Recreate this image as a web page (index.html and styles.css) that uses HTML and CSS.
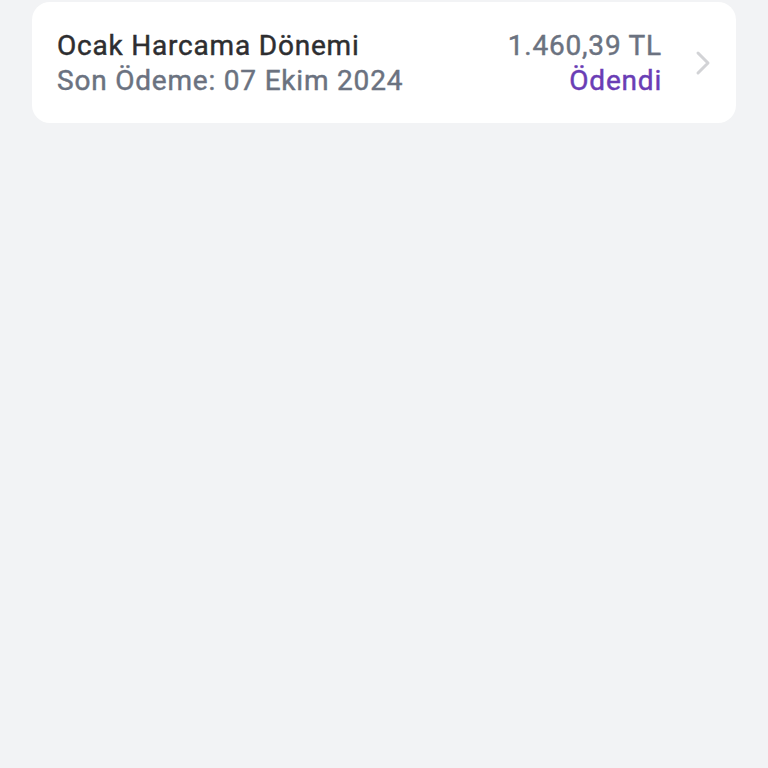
FILE: index.html
```html
<!DOCTYPE html>
<html lang="tr">
<head>
<meta charset="utf-8">
<link rel="stylesheet" href="styles.css">
</head>
<body>
<main class="page">
  <div class="card">
    <div class="info">
      <div class="title">Ocak Harcama Dönemi</div>
      <div class="sub">Son Ödeme: 07 Ekim 2024</div>
    </div>
    <div class="right">
      <div class="amount">1.460,39 TL</div>
      <div class="status">Ödendi</div>
    </div>
    <svg class="chev" width="18" height="26" viewBox="0 0 18 26"><path d="M4 3 L14 13 L4 23" fill="none" stroke="#d2d3d6" stroke-width="3" stroke-linecap="round" stroke-linejoin="round"/></svg>
  </div>
</main>
</body>
</html>
```
FILE: styles.css
```css
html, body { margin: 0; padding: 0; }
body {
  background: #f2f3f5;
  font-family: Roboto, "Liberation Sans", sans-serif;
  width: 768px;
  height: 768px;
}
.page { padding: 2px 32px 0 32px; }
.card {
  background: #ffffff;
  border-radius: 18px;
  height: 121px;
  box-sizing: border-box;
  padding: 0 24px 0 25px;
  display: flex;
  align-items: center;
}
.info { flex: 1; display: flex; flex-direction: column; }
.title, .sub, .amount, .status {
  font-size: 28px;
  line-height: 35px;
  font-weight: 400;
  letter-spacing: 0.8px;
  -webkit-text-stroke: 0.45px currentColor;
}
.title { color: #2e2e30; }
.sub { color: #6b7280; }
.right { display: flex; flex-direction: column; align-items: flex-end; }
.amount { color: #6b7280; }
.status { color: #6a3db5; }
.chev { margin-left: 32px; display: block; }
```
